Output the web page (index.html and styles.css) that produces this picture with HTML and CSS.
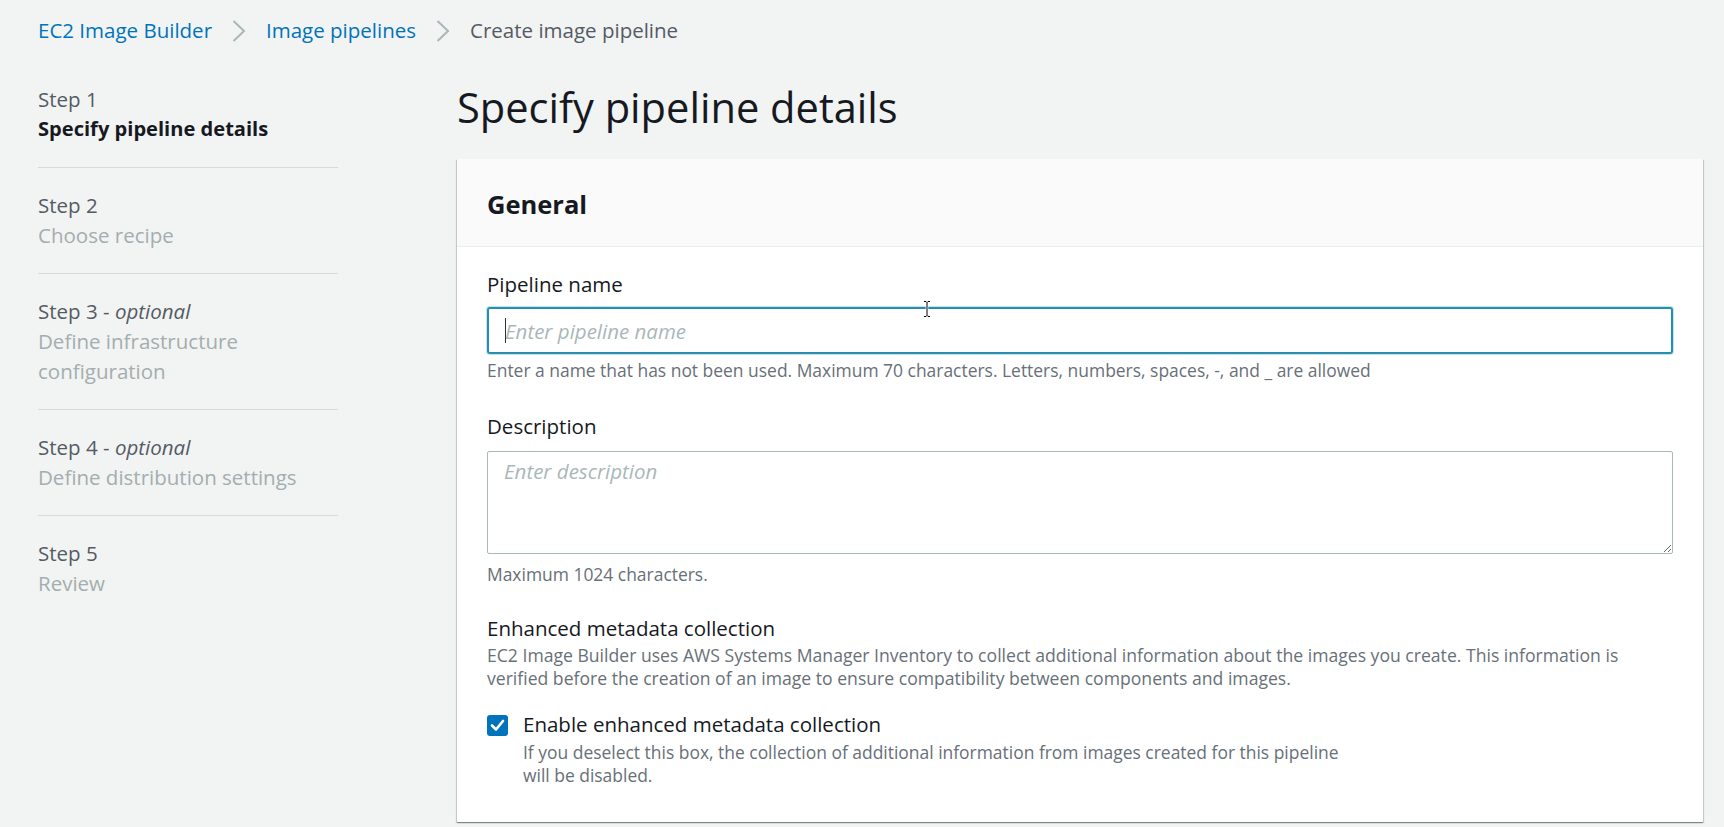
FILE: index.html
```html
<!DOCTYPE html>
<html lang="en">
<head>
<meta charset="utf-8">
<title>Create image pipeline</title>
<link rel="stylesheet" href="styles.css">
</head>
<body>
<nav class="crumbs">
  <a class="crumb-link" href="#">EC2 Image Builder</a>
  <svg class="chev" width="14" height="22" viewBox="0 0 14 22"><polyline points="1.5,1 12,11 1.5,21"/></svg>
  <a class="crumb-link" href="#">Image pipelines</a>
  <svg class="chev" width="14" height="22" viewBox="0 0 14 22"><polyline points="1.5,1 12,11 1.5,21"/></svg>
  <span class="crumb-current">Create image pipeline</span>
</nav>
<div class="layout">
  <ol class="steps">
    <li class="step">
      <div class="step-num">Step 1</div>
      <div class="step-title current">Specify pipeline details</div>
    </li>
    <li class="step">
      <div class="step-num">Step 2</div>
      <div class="step-title">Choose recipe</div>
    </li>
    <li class="step">
      <div class="step-num">Step 3 - <i>optional</i></div>
      <div class="step-title">Define infrastructure configuration</div>
    </li>
    <li class="step">
      <div class="step-num">Step 4 - <i>optional</i></div>
      <div class="step-title">Define distribution settings</div>
    </li>
    <li class="step">
      <div class="step-num">Step 5</div>
      <div class="step-title">Review</div>
    </li>
  </ol>
  <main class="main">
    <h1 class="page-title">Specify pipeline details</h1>
    <section class="card">
      <header class="card-header"><h2 class="card-title">General</h2></header>
      <div class="card-body">
        <div class="field">
          <label class="field-label" for="pname">Pipeline name</label>
          <div class="input-wrap">
            <input id="pname" class="input" type="text" placeholder="Enter pipeline name">
            <span class="caret"></span>
          </div>
          <div class="hint hint-input">Enter a name that has not been used. Maximum 70 characters. Letters, numbers, spaces, -, and _ are allowed</div>
        </div>
        <div class="field field-desc">
          <label class="field-label" for="pdesc">Description</label>
          <textarea id="pdesc" class="textarea" placeholder="Enter description"></textarea>
          <div class="hint hint-textarea">Maximum 1024 characters.</div>
        </div>
        <div class="field field-meta">
          <div class="field-label">Enhanced metadata collection</div>
          <div class="hint meta-desc">EC2 Image Builder uses AWS Systems Manager Inventory to collect additional information about the images you create. This information is verified before the creation of an image to ensure compatibility between components and images.</div>
          <div class="check-row">
            <span class="checkbox"><svg width="21" height="21" viewBox="0 0 21 21"><polyline points="5,10.5 9,14.5 16,6"/></svg></span>
            <div class="check-text">
              <div class="check-label">Enable enhanced metadata collection</div>
              <div class="hint check-desc">If you deselect this box, the collection of additional information from images created for this pipeline will be disabled.</div>
            </div>
          </div>
        </div>
      </div>
    </section>
  </main>
</div>
<svg class="ibeam" width="10" height="18" viewBox="0 0 10 18">
  <path d="M2 1.5h2l1 1 1-1h2M5 2.5v13M2 16.5h2l1-1 1 1h2" stroke="#fff" stroke-width="2.6" fill="none"/>
  <path d="M2 1.5h2l1 1 1-1h2M5 2.5v13M2 16.5h2l1-1 1 1h2" stroke="#000" stroke-width="1" fill="none"/>
</svg>
</body>
</html>
```
FILE: styles.css
```css
* { box-sizing: border-box; }
html, body { margin: 0; height: 100%; }
body {
  background: #f2f3f3;
  font-family: "Open Sans", "Noto Sans", sans-serif;
  color: #16191f;
  font-size: 20.5px;
  line-height: 29px;
  overflow: hidden;
  position: relative;
}

/* Breadcrumbs */
.crumbs {
  display: flex;
  align-items: center;
  gap: 20px;
  padding: 16px 0 0 38px;
  height: 45px;
}
.crumb-link { color: #0073bb; text-decoration: none; }
.crumb-current { color: #545b64; }
.chev { flex: none; }
.chev polyline { fill: none; stroke: #aab7b8; stroke-width: 2; }

/* Layout */
.layout {
  display: grid;
  grid-template-columns: 300px 1fr;
  column-gap: 119px;
  padding: 0 21px 0 38px;
  margin-top: 17px;
}

/* Steps */
.steps { list-style: none; margin: 0; padding: 0; }
.step {
  padding: 22px 0 23px;
  border-top: 1px solid #d5dbdb;
  line-height: 30px;
}
.step:first-child { border-top: 0; }
.step-num { color: #545b64; }
.step-title { color: #a3aeae; }
.step-title.current { color: #16191f; font-weight: 700; font-size: 20.1px; }

/* Main */
.main { padding-top: 21px; min-width: 0; }
.page-title {
  margin: 0 0 28px;
  font-size: 41.6px;
  line-height: 48px;
  font-weight: 400;
  color: #16191f;
}

.card {
  background: #fff;
  box-shadow: 0 1px 1px 0 rgba(0, 28, 36, .3), 1px 1px 1px 0 rgba(0, 28, 36, .15), -1px 1px 1px 0 rgba(0, 28, 36, .15);
}
.card-header {
  background: #fafafa;
  border-bottom: 1px solid #eaeded;
  padding: 27px 30px 24px;
}
.card-title {
  margin: 0;
  font-size: 25.5px;
  line-height: 36px;
  font-weight: 700;
}
.card-body { padding: 23px 30px 35px; }

.field-label { display: block; color: #16191f; }
.input-wrap { position: relative; margin-top: 8px; }
.input {
  display: block;
  width: 100%;
  height: 47px;
  border: 2px solid #2b8dad;
  border-radius: 3px;
  box-shadow: 0 0 0 1px rgba(68, 185, 214, .35);
  padding: 0 16px;
  font-family: inherit;
  font-size: 20.5px;
  color: #16191f;
  outline: none;
  background: #fff;
}
.input::placeholder, .textarea::placeholder { color: #aab7b8; font-style: italic; opacity: 1; }
.caret {
  position: absolute;
  left: 18px;
  top: 11px;
  width: 1px;
  height: 25px;
  background: #2f3437;
}

.hint { font-size: 17.45px; line-height: 23px; color: #687078; }
.hint-input { margin-top: 5px; }

.field-desc { margin-top: 30px; }
.textarea {
  display: block;
  width: 100%;
  height: 103px;
  margin-top: 10px;
  border: 1px solid #aab7b8;
  border-radius: 2px;
  padding: 5px 16px;
  font-family: inherit;
  font-size: 20.5px;
  line-height: 29px;
  color: #16191f;
  background: #fff;
  outline: none;
}
.hint-textarea { margin-top: 8.5px; }

.field-meta { margin-top: 28px; }
.meta-desc { margin-top: 1.5px; padding-right: 30px; font-size: 17.6px; }

.check-row {
  display: flex;
  align-items: flex-start;
  gap: 15px;
  margin-top: 20px;
}
.checkbox {
  flex: none;
  width: 21px;
  height: 21px;
  margin-top: 5px;
  border-radius: 3px;
  background: #0073bb;
  display: block;
}
.checkbox svg { display: block; }
.checkbox polyline { fill: none; stroke: #fff; stroke-width: 2.6; stroke-linecap: round; stroke-linejoin: round; }
.check-label { color: #16191f; }
.check-desc { margin-top: 2px; max-width: 830px; }

.ibeam { position: absolute; left: 922px; top: 300px; }
```
